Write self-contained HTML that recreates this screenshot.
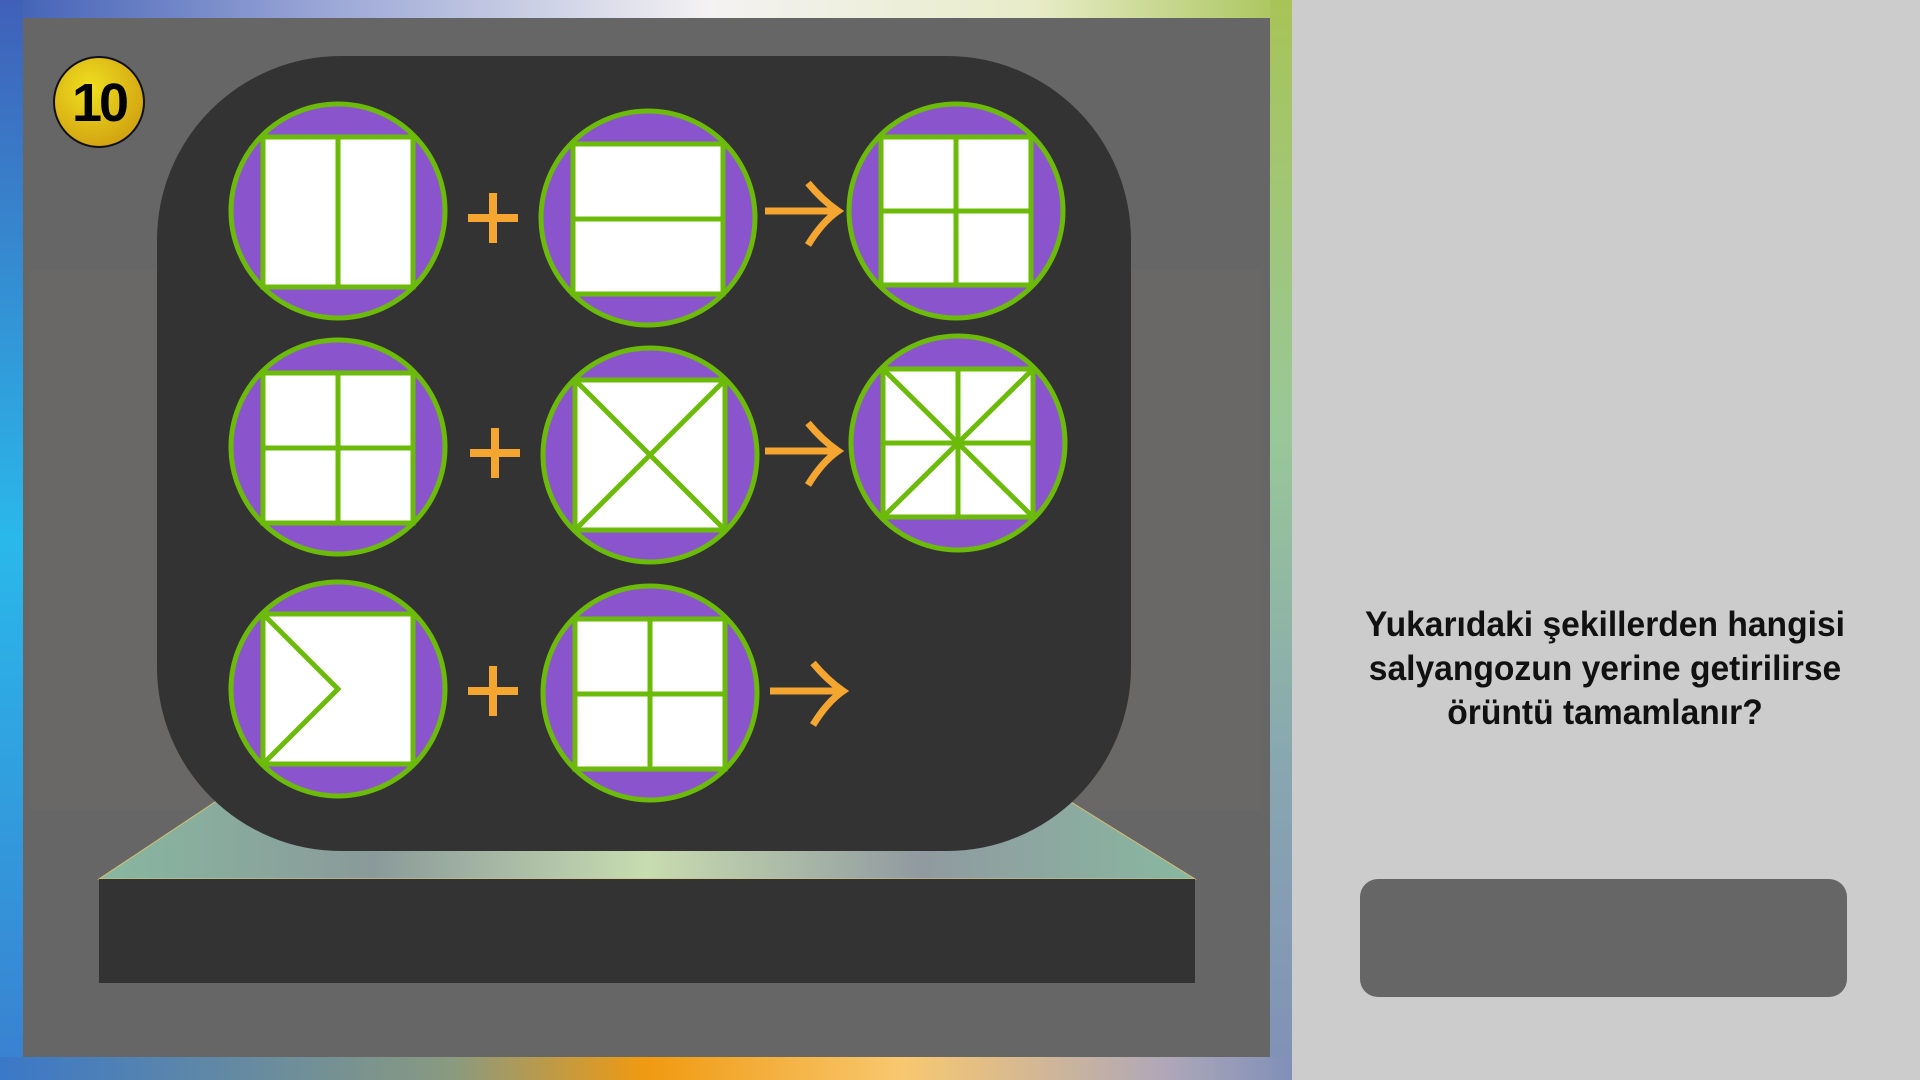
<!DOCTYPE html>
<html><head><meta charset="utf-8"><style>
html,body{margin:0;padding:0;width:1920px;height:1080px;overflow:hidden;background:#ccc}
.frame{position:absolute;left:0;top:0;width:1292px;height:1080px;
background:linear-gradient(90deg,#3f5fb5 0%,#9aa6d6 25%,#f4f2f2 55%,#e8ecc8 80%,#a8c458 100%);}
.bottom{position:absolute;left:0;top:1057px;width:1292px;height:23px;
background:linear-gradient(90deg,#3a78c8 0%,#8a9a80 35%,#f09a10 50%,#f8c870 70%,#b0a8b8 90%,#8090b8 100%)}
.left{position:absolute;left:0;top:0;width:23px;height:1080px;background:linear-gradient(180deg,#4060b8 0%,#2ab8ea 50%,#3a80d0 100%)}
.right{position:absolute;left:1270px;top:0;width:22px;height:1080px;background:linear-gradient(180deg,#a8c458 0%,#98c898 40%,#88a8b0 70%,#8090b8 100%)}
.panel{position:absolute;left:23px;top:18px;width:1247px;height:1039px;background:#666}
.q{position:absolute;left:1305px;top:603px;width:600px;text-align:center;font-family:"Liberation Sans",sans-serif;font-weight:bold;font-size:35px;line-height:44px;color:#111;transform:scaleX(0.96);transform-origin:center top}
.btn{position:absolute;left:1360px;top:879px;width:487px;height:118px;background:#666;border-radius:18px}
</style></head><body>
<div class="frame"></div>
<div class="left"></div>
<div class="right"></div>
<div class="bottom"></div>
<div class="panel"></div>
<svg style="position:absolute;left:0;top:0" width="1292" height="1080">
<defs>
<linearGradient id="tr" x1="0" x2="1" y1="0" y2="0">
<stop offset="0" stop-color="#88b8a0"/><stop offset="0.25" stop-color="#8a9a9a"/><stop offset="0.5" stop-color="#c8dcb0"/><stop offset="0.75" stop-color="#909aa0"/><stop offset="1" stop-color="#88b8a0"/></linearGradient>
<radialGradient id="bd" cx="0.4" cy="0.35" r="0.7"><stop offset="0" stop-color="#f0e020"/><stop offset="1" stop-color="#d0a010"/></radialGradient>
</defs>
<rect x="30" y="270" width="1230" height="540" fill="#6d6a66" opacity="0.5"/>
<polygon points="215,802 1071,802 1195,879 99,879" fill="url(#tr)" stroke="#d8c070" stroke-width="1"/>
<rect x="99" y="879" width="1096" height="104" fill="#333"/>
<rect x="157" y="56" width="974" height="795" rx="184" fill="#333"/>
<circle cx="99" cy="102" r="45" fill="url(#bd)" stroke="#111" stroke-width="2"/>
<text x="99" y="121" text-anchor="middle" font-family="Liberation Sans,sans-serif" font-weight="bold" font-size="54" fill="#000" letter-spacing="-3">10</text>
<g stroke="#6cbb0a" stroke-width="5" fill="none">
<circle cx="338" cy="211" r="107" fill="#8a55cc"/>
<rect x="263" y="137" width="150" height="150" fill="#fff"/><line x1="338" y1="137" x2="338" y2="287"/>
<circle cx="648" cy="218" r="107" fill="#8a55cc"/>
<rect x="573" y="144" width="150" height="150" fill="#fff"/><line x1="573" y1="219" x2="723" y2="219"/>
<circle cx="956" cy="211" r="107" fill="#8a55cc"/>
<rect x="881" y="137" width="150" height="148" fill="#fff"/><line x1="956" y1="137" x2="956" y2="285"/><line x1="881" y1="211" x2="1031" y2="211"/>
<circle cx="338" cy="447" r="107" fill="#8a55cc"/>
<rect x="263" y="373" width="150" height="150" fill="#fff"/><line x1="338" y1="373" x2="338" y2="523"/><line x1="263" y1="448" x2="413" y2="448"/>
<circle cx="650" cy="455" r="107" fill="#8a55cc"/>
<rect x="575" y="380" width="150" height="150" fill="#fff"/><line x1="575" y1="380" x2="725" y2="530"/><line x1="725" y1="380" x2="575" y2="530"/>
<circle cx="958" cy="443" r="107" fill="#8a55cc"/>
<rect x="883" y="369" width="150" height="148" fill="#fff"/><line x1="958" y1="369" x2="958" y2="517"/><line x1="883" y1="443" x2="1033" y2="443"/><line x1="883" y1="369" x2="1033" y2="517"/><line x1="1033" y1="369" x2="883" y2="517"/>
<circle cx="338" cy="689" r="107" fill="#8a55cc"/>
<rect x="263" y="614" width="150" height="150" fill="#fff"/><polyline points="263,614 338,689 263,764"/>
<circle cx="650" cy="693" r="107" fill="#8a55cc"/>
<rect x="575" y="619" width="150" height="150" fill="#fff"/><line x1="650" y1="619" x2="650" y2="769"/><line x1="575" y1="694" x2="725" y2="694"/>
</g>
<g stroke="#f5a630" stroke-width="8" fill="none" stroke-linecap="butt">
<line x1="468" y1="218" x2="518" y2="218"/><line x1="493" y1="193" x2="493" y2="243"/>
<line x1="470" y1="453" x2="520" y2="453"/><line x1="495" y1="428" x2="495" y2="478"/>
<line x1="468" y1="691" x2="518" y2="691"/><line x1="493" y1="666" x2="493" y2="716"/>
</g>
<g stroke="#f5a630" stroke-width="7" fill="none">
<path d="M765 211H836M808 183Q822 200 838 211Q822 222 808 245"/>
<path d="M765 451H836M808 423Q822 440 838 451Q822 462 808 485"/>
<path d="M770 691H841M813 663Q827 680 843 691Q827 702 813 725"/>
</g>
</svg>
<div class="q">Yukarıdaki şekillerden hangisi<br>salyangozun yerine getirilirse<br>örüntü tamamlanır?</div>
<div class="btn"></div>
</body></html>
